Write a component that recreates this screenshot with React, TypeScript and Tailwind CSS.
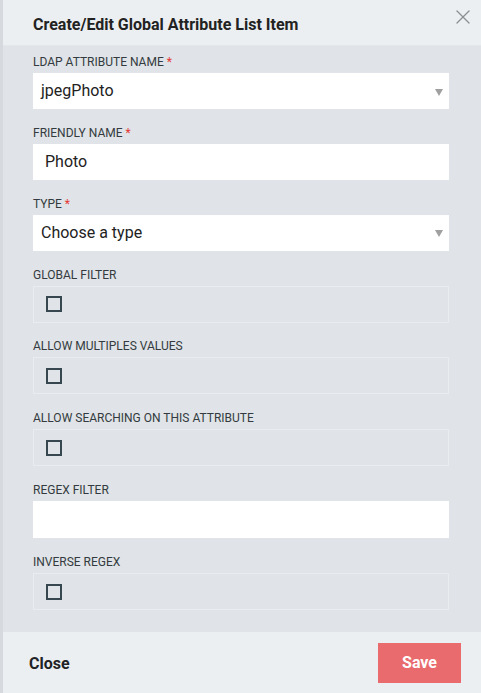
import { X } from 'lucide-react'

const Label = ({ text, required }: { text: string; required?: boolean }) => (
    <div className="text-[12px] leading-[14px] text-[#333b40] uppercase mb-[4px]">
        {text}
        {required && <span className="text-[#e53935] ml-[3px]">*</span>}
    </div>
)

const Select = ({ value }: { value: string }) => (
    <div className="h-[36px] bg-white flex items-center justify-between pl-[8px] pr-[6px] text-[16px] text-[#222]">
        <span>{value}</span>
        <svg width="8" height="7" viewBox="0 0 8 7" className="mt-[2px]">
            <path d="M0 0 L8 0 L4 7 Z" fill="#a0a0a0" />
        </svg>
    </div>
)

const CheckBox = () => (
    <div className="h-[37px] border border-[#eaedf0] flex items-center pl-[12px]">
        <div className="w-[16px] h-[16px] border-2 border-[#37474f]" />
    </div>
)

export default function App() {
    return (
        <div className="h-screen w-full flex flex-col font-['Roboto',sans-serif] bg-[#e0e3e7] border-l-[3px] border-[#d6d9dd]">
            <div className="h-[46px] shrink-0 bg-[#eceff1] flex items-center justify-between pl-[30px] pr-[6px] border-b border-[#e4e7ea]">
                <h1 className="text-[16px] font-bold text-[#222] mt-[4px]">Create/Edit Global Attribute List Item</h1>
                <X className="w-[24px] h-[24px] text-[#8a8f93] -mt-[11px]" strokeWidth={1.3} />
            </div>

            <div className="flex-1 flex flex-col gap-[16.86px] pl-[30px] pr-[32px] pt-[9px]">
                <div>
                    <Label text="LDAP Attribute Name" required />
                    <Select value="jpegPhoto" />
                </div>
                <div>
                    <Label text="Friendly Name" required />
                    <div className="h-[36px] bg-white flex items-center pl-[12px] text-[16px] text-[#222]">Photo</div>
                </div>
                <div>
                    <Label text="Type" required />
                    <Select value="Choose a type" />
                </div>
                <div>
                    <Label text="Global Filter" />
                    <CheckBox />
                </div>
                <div>
                    <Label text="Allow multiples values" />
                    <CheckBox />
                </div>
                <div>
                    <Label text="Allow searching on this attribute" />
                    <CheckBox />
                </div>
                <div>
                    <Label text="Regex filter" />
                    <div className="h-[37px] bg-white" />
                </div>
                <div>
                    <Label text="Inverse regex" />
                    <CheckBox />
                </div>
            </div>

            <div className="h-[61px] shrink-0 bg-[#eceff1] flex items-center justify-between pl-[26px] pr-[20px]">
                <button className="text-[16px] font-bold text-[#1f2326] mt-[2px]">Close</button>
                <button className="w-[83px] h-[40px] bg-[#e96b6d] text-white text-[16px] font-bold">Save</button>
            </div>
        </div>
    )
}
